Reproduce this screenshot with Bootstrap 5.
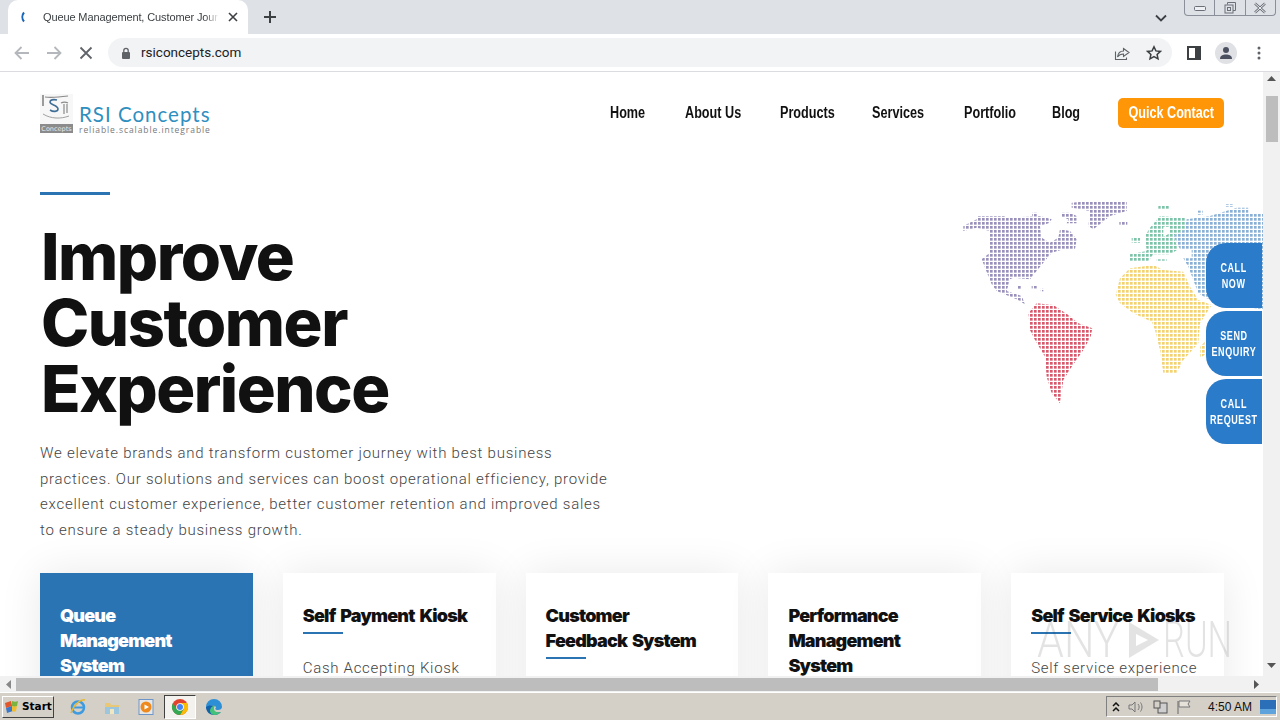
<!DOCTYPE html>
<html lang="en">
<head>
    <meta charset="UTF-8">
    <meta name="viewport" content="width=device-width, initial-scale=1.0">
    <title>Queue Management, Customer Journey - RSI Concepts</title>
    <link href="https://cdn.jsdelivr.net/npm/bootstrap@5.3.0/dist/css/bootstrap.min.css" rel="stylesheet">
    <style>
        html, body { height: 720px; overflow: hidden; }
        body { font-family: "Liberation Sans", sans-serif; background: #fff; }
        .win-shell { width: 1280px; height: 720px; }

        /* browser chrome */
        .tab-strip { height: 34px; background: #dee1e6; padding-left: 8px; }
        .tab-live { width: 240px; height: 34px; background: #fff; border-radius: 10px 10px 0 0; padding-left: 11px; padding-right: 9px; }
        .tab-name { font-size: 11px; letter-spacing: -.12px; color: #3c4043; width: 176px; margin-left: 16px; overflow: hidden; white-space: nowrap; -webkit-mask-image: linear-gradient(90deg, #000 92%, transparent); mask-image: linear-gradient(90deg, #000 92%, transparent); }
        .tab-plus { margin-left: 15px; }
        .tab-chevron { margin-left: auto; margin-right: 17px; margin-top: 2px; }
        .win-btns { align-self: flex-start; width: 92px; height: 16px; border: 1px solid #8a8f99; border-top: 0; border-radius: 0 0 4px 4px; margin-right: 4px; }
        .win-btns > span { height: 100%; border-right: 1px solid #8a8f99; }
        .win-btns > span:last-child { border-right: 0; }
        .tool-bar { height: 38px; background: #fff; border-bottom: 1px solid #dadce0; padding-left: 13px; }
        .omni { width: 1064px; height: 29px; margin-left: 15px; background: #f1f3f4; border-radius: 15px; padding-left: 13px; padding-right: 10px; font-size: 13.5px; color: #202124; font-family: Roboto, sans-serif; }
        .omni-host { margin-left: 10px; }
        .avatar-dot { width: 22px; height: 22px; border-radius: 50%; background: #dfe1e5; }
        .gap-fwd { margin-left: 14px; }
        .gap-stop { margin-left: 16px; }
        .gap-panel { margin-left: 15px; }
        .gap-avatar { margin-left: 14px; }
        .gap-dots { margin-left: 20px; }

        /* page area */
        .page-area { height: 604px; }
        .page-view { width: 1263px; height: 604px; overflow: hidden; }
        .scroll-v { width: 17px; height: 604px; background: #f1f1f1; }
        .scroll-v-thumb { width: 12px; height: 46px; background: #bdbdbd; margin: 15px auto 0; }
        .scroll-h { height: 16px; background: #f1f1f1; padding-left: 16px; }
        .scroll-h-thumb { width: 1142px; height: 13px; background: #bdbdbd; }
        .arrow-box { width: 16px; height: 16px; }

        .site-head { height: 82px; padding: 0 39px 0 40px; }
        .brand-text { margin-left: 6px; }
        .brand-name { font-family: Lato, sans-serif; font-size: 20.5px; line-height: 20px; color: #2f8fbf; letter-spacing: 1px; margin-bottom: 1px; }
        .brand-tag { font-family: "Open Sans", sans-serif; font-size: 8.5px; line-height: 9px; color: #77797c; letter-spacing: .93px; white-space: nowrap; margin-bottom: -1px; }
        .brand-strip { fill: #8b8b8b; }
        /* the nav face is a tall narrow grotesque: squeezed Liberation Sans in fixed columns */
        .nav-grid { display: grid; grid-template-columns: 37px 57px 54px 54px 50px 28px 106px; column-gap: 38px; align-items: center; }
        .site-link { font-weight: 700; font-size: 16px; color: #111; text-decoration: none; white-space: nowrap; display: inline-block; transform: scaleX(.79); transform-origin: left center; }
        .quick-btn { font-weight: 700; font-size: 16px; background: #ff9607; color: #fff; border: 0; border-radius: 5px; width: 106px; height: 30px; padding: 0; white-space: nowrap; }
        .quick-btn span { display: inline-block; transform: scaleX(.79); }

        .hero-wrap { padding-top: 36px; padding-left: 40px; height: 419px; }
        .hero-copy { width: 570px; }
        .hero-rule { width: 70px; height: 3px; background: #2b74b4; margin-top: 2px; margin-bottom: 29px; }
        .hero-title { font-family: Inter, sans-serif; font-weight: 800; font-size: 65px; line-height: 66px; color: #111; letter-spacing: -1.5px; margin: 0 0 19px 1px; }
        .hero-text { font-family: Roboto, sans-serif; font-weight: 300; font-size: 15px; line-height: 25.6px; letter-spacing: .76px; color: #444; margin: 0; width: 570px; }
        .hero-map { margin-left: auto; flex: none; }

        .side-stack { position: absolute; right: 1px; top: 171px; width: 56px; }
        .side-btn { width: 56px; height: 65px; margin-bottom: 3px; background: #2a7bc9; color: #fff; border-radius: 20px 0 0 20px; font-weight: 700; font-size: 12px; line-height: 16px; letter-spacing: .8px; text-align: center; }
        .side-btn span { display: inline-block; white-space: nowrap; transform: scaleX(.75); }

        .tile-row { gap: 30px; padding: 0 39px 0 40px; }
        .tile { width: 212.8px; height: 300px; padding: 30px 20px; background: #fff; box-shadow: 0 0 40px rgba(0,0,0,.09); flex: none; }
        .tile-on { background: #2b74b4; }
        .tile-title { font-family: Inter, sans-serif; font-weight: 900; font-size: 18px; line-height: 25px; letter-spacing: -.8px; word-spacing: 2px; color: #111; margin: 0; }
        .tile-on .tile-title { color: #fff; }
        .tile-rule { width: 40px; height: 2px; background: #2b74b4; margin-top: 4px; margin-bottom: 22px; }
        .tile-text { font-family: Roboto, sans-serif; font-weight: 300; font-size: 15px; line-height: 25px; letter-spacing: .7px; color: #444; margin: 0; white-space: nowrap; }

        .any-mark { position: absolute; left: 1037px; top: 615px; width: 197px; height: 50px; opacity: .13; pointer-events: none; color: #333; font-family: Roboto, sans-serif; font-weight: 300; font-size: 50px; line-height: 50px; }
        .any-word { transform: scaleX(.86); transform-origin: left center; width: 90px; flex: none; }
        .any-word-end { transform: scaleX(.69); transform-origin: left center; width: 69px; margin-left: 2px; flex: none; }

        /* taskbar */
        .task-bar { height: 28px; background: #d4d0c8; border-top: 1px solid #fff; box-shadow: inset 0 1px 0 #d4d0c8; padding-left: 2px; position: relative; }
        .start-btn { width: 52px; height: 22px; border: 1px solid; border-color: #fff #404040 #404040 #fff; font-family: "DejaVu Sans", sans-serif; font-size: 10.5px; font-weight: 700; color: #000; gap: 2px; padding-left: 1px; }
        .task-ico { width: 32px; height: 24px; margin-right: 2px; }
        .task-ico-on { background: #f4f2ee; border: 1px solid; border-color: #404040 #fff #fff #404040; }
        .task-ico-wrap { margin-left: 8px; }
        .tray-box { width: 171px; height: 21px; margin-left: auto; margin-right: 3px; border: 1px solid; border-color: #808080 #fff #fff #808080; font-size: 12px; color: #111; padding-left: 5px; }
        .tray-time { margin-left: 16px; margin-right: 8px; white-space: nowrap; }
        .tray-gap { margin-left: 8px; }
    </style>
</head>
<body>
<div class="win-shell d-flex flex-column">

    <!-- tab strip -->
    <div class="tab-strip d-flex align-items-center">
        <div class="tab-live d-flex align-items-center">
            <svg width="8" height="14" viewBox="0 0 8 14"><path d="M5 2.500a7 7 0 0 0 0 9" fill="none" stroke="#1a66b8" stroke-width="2"/></svg>
            <span class="tab-name">Queue Management, Customer Jour</span>
            <svg class="ms-auto" width="12" height="12" viewBox="0 0 12 12"><path d="M2 2l8 8M10 2l-8 8" stroke="#3c4043" stroke-width="1.600"/></svg>
        </div>
        <svg class="tab-plus" width="14" height="14" viewBox="0 0 14 14"><path d="M7 1v12M1 7h12" stroke="#3c4043" stroke-width="2"/></svg>
        <svg class="tab-chevron" width="12" height="8" viewBox="0 0 12 8"><path d="M1 1.500l5 5 5-5" fill="none" stroke="#3c4043" stroke-width="1.800"/></svg>
        <div class="win-btns d-flex">
            <span class="flex-fill d-flex align-items-center justify-content-center"><svg width="14" height="8" viewBox="0 0 14 8"><rect x="1.500" y="2.500" width="11" height="4" rx="1" fill="#eef0f3" stroke="#6a6f78"/></svg></span>
            <span class="flex-fill d-flex align-items-center justify-content-center"><svg width="14" height="14" viewBox="0 0 14 14"><path d="M4.500 3.500v-2h8v8h-2.500" fill="none" stroke="#6a6f78"/><rect x="2" y="4" width="8" height="8" fill="none" stroke="#6a6f78"/><rect x="4.500" y="6.500" width="3" height="3" fill="none" stroke="#6a6f78"/></svg></span>
            <span class="flex-fill d-flex align-items-center justify-content-center"><svg width="14" height="12" viewBox="0 0 14 12"><path d="M2 1.500l10 9M12 1.500l-10 9" stroke="#6a6f78" stroke-width="2.400"/><path d="M2 1.500l10 9M12 1.500l-10 9" stroke="#eef0f3" stroke-width="1"/></svg></span>
        </div>
    </div>

    <!-- toolbar -->
    <div class="tool-bar d-flex align-items-center">
        <svg width="18" height="16" viewBox="0 0 18 16"><path d="M16 8H3M8.500 2L2.500 8l6 6" fill="none" stroke="#b4b7bb" stroke-width="1.800"/></svg>
        <svg class="gap-fwd" width="18" height="16" viewBox="0 0 18 16"><path d="M2 8h13M9.500 2l6 6-6 6" fill="none" stroke="#b4b7bb" stroke-width="1.800"/></svg>
        <svg class="gap-stop" width="14" height="14" viewBox="0 0 14 14"><path d="M1.500 1.500l11 11M12.500 1.500l-11 11" stroke="#5f6368" stroke-width="1.800"/></svg>
        <div class="omni d-flex align-items-center">
            <svg width="10" height="12" viewBox="0 0 10 12"><rect x="1" y="5" width="8" height="7" rx="1" fill="#5f6368"/><path d="M2.800 5V3.500a2.200 2.200 0 0 1 4.400 0V5" fill="none" stroke="#5f6368" stroke-width="1.300"/></svg>
            <span class="omni-host">rsiconcepts.com</span>
            <svg class="ms-auto" width="16" height="16" viewBox="0 0 16 16"><path d="M9.500 3.500L15 7.500l-5.500 4V9C6 9 4.500 10.500 3.500 12 4 8.500 6 6 9.500 6z M1.500 6.500v8h11v-2" fill="none" stroke="#5f6368" stroke-width="1.100"/></svg>
            <svg class="ms-3" width="16" height="16" viewBox="0 0 16 16"><path d="M8 1.800l1.900 4.100 4.500.5-3.300 3 .9 4.500L8 11.700l-4 2.200.9-4.500-3.300-3 4.500-.5z" fill="none" stroke="#3c4043" stroke-width="1.500"/></svg>
        </div>
        <svg class="gap-panel" width="14" height="14" viewBox="0 0 14 14"><rect width="14" height="14" fill="#3c4043"/><rect x="2" y="2" width="6" height="10" fill="#fff"/></svg>
        <div class="avatar-dot gap-avatar d-flex align-items-center justify-content-center">
            <svg width="14" height="14" viewBox="0 0 14 14"><circle cx="7" cy="4" r="3" fill="#4a5060"/><path d="M1 13c0-3.500 3-4.500 6-4.500s6 1 6 4.500z" fill="#4a5060"/></svg>
        </div>
        <svg class="gap-dots" width="4" height="14" viewBox="0 0 4 14"><circle cx="2" cy="2" r="1.500" fill="#5f6368"/><circle cx="2" cy="7" r="1.500" fill="#5f6368"/><circle cx="2" cy="12" r="1.500" fill="#5f6368"/></svg>
    </div>

    <!-- page + scrollbars -->
    <div class="page-area d-flex">
        <div class="page-view position-relative">
            <header class="site-head d-flex align-items-center justify-content-between">
                <a class="d-flex align-items-end text-decoration-none" href="#">
                    <svg width="33" height="39" viewBox="0 0 33 39">
                        <rect x="0" y="0" width="33" height="30" fill="#f7f7f7"/>
                        <path d="M3 1v11" fill="none" stroke="#6a6a6a" stroke-width="1.300"/>
                        <path d="M5 3c7 1 15 0 23-1" fill="none" stroke="#8a8a8a" stroke-width="1.200"/>
                        <path d="M17 6c-4-1-7 0-7 2 0 3 8 3 8 7 0 3-5 3-8 1" fill="none" stroke="#3f6f96" stroke-width="1.600"/>
                        <path d="M21 9c2-1 5-1 7 0M24 10v10M27 10v9" fill="none" stroke="#8a8a8a" stroke-width="1.200"/>
                        <path d="M3 20c8 5 18 5 26 2" fill="none" stroke="#a0a0a0" stroke-width="1"/>
                        <rect class="brand-strip" y="30" width="33" height="9"/>
                        <text x="16.500" y="37" text-anchor="middle" font-size="6.500" font-family="DejaVu Sans, sans-serif" fill="#e8e8e8">Concepts</text>
                    </svg>
                    <span class="brand-text d-flex flex-column">
                        <span class="brand-name">RSI Concepts</span>
                        <span class="brand-tag">reliable.scalable.integrable</span>
                    </span>
                </a>
                <nav class="nav-grid">
                    <a class="site-link" href="#">Home</a>
                    <a class="site-link" href="#">About Us</a>
                    <a class="site-link" href="#">Products</a>
                    <a class="site-link" href="#">Services</a>
                    <a class="site-link" href="#">Portfolio</a>
                    <a class="site-link" href="#">Blog</a>
                    <button class="quick-btn d-flex align-items-center justify-content-center" type="button"><span>Quick Contact</span></button>
                </nav>
            </header>

            <section class="hero-wrap d-flex">
                <div class="hero-copy">
                    <div class="hero-rule"></div>
                    <h1 class="hero-title">Improve<br>Customer<br>Experience</h1>
                    <p class="hero-text">We elevate brands and transform customer journey with best business practices. Our solutions and services can boost operational efficiency, provide excellent customer experience, better customer retention and improved sales to ensure a steady business growth.</p>
                </div>
                <svg class="hero-map" width="313" height="270" viewBox="0 0 939 810">
                    <defs>
                        <pattern id="dotPurple" width="12" height="12" patternUnits="userSpaceOnUse"><rect width="8" height="8" fill="#9a90bc"/></pattern>
                        <pattern id="dotRed" width="12" height="12" patternUnits="userSpaceOnUse"><rect width="8" height="8" fill="#d9596c"/></pattern>
                        <pattern id="dotYellow" width="12" height="12" patternUnits="userSpaceOnUse"><rect width="8" height="8" fill="#f4d272"/></pattern>
                        <pattern id="dotGreen" width="12" height="12" patternUnits="userSpaceOnUse"><rect width="8" height="8" fill="#7cc3a8"/></pattern>
                        <pattern id="dotBlue" width="12" height="12" patternUnits="userSpaceOnUse"><rect width="8" height="8" fill="#8bb0d6"/></pattern>
                    </defs>
                    <g fill="url(#dotPurple)">
                        <polygon points="40,108 80,88 85,78 165,78 170,83 270,78 305,88 300,98 270,108 275,143 300,158 325,143 330,118 360,123 380,148 375,178 340,178 305,188 280,218 260,243 240,268 190,263 180,268 170,303 215,318 225,343 200,328 140,303 125,283 115,258 95,208 120,188 120,123 80,113 40,123"/>
                        <polygon points="365,38 420,33 530,33 530,63 480,78 450,103 430,118 415,108 420,63 365,53"/>
                        <polygon points="335,68 360,68 380,78 380,100 350,100 355,88 335,80"/>
                        <polygon points="508,96 532,96 532,105 508,105"/>
                        <polygon points="204,288 216,288 216,300 204,300"/>
                        <polygon points="245,288 262,288 262,296 245,296"/>
                        <polygon points="272,296 280,296 280,304 272,304"/>
                        <polygon points="246,68 262,68 262,78 246,78"/>
                    </g>
                    <polygon fill="url(#dotRed)" points="235,370 260,340 310,345 355,375 385,400 427,415 422,440 400,480 365,530 340,570 330,640 305,610 290,560 285,500 255,450 240,420"/>
                    <g fill="url(#dotGreen)">
                        <polygon points="600,113 630,78 705,83 705,118 670,138 685,178 660,193 610,193 595,213 540,213 540,193 590,183 585,138"/>
                        <polygon points="545,143 570,143 570,158 545,158"/>
                        <polygon points="625,46 660,46 660,58 625,58"/>
                        <polygon points="620,208 650,208 650,216 620,216"/>
                    </g>
                    <g fill="url(#dotBlue)">
                        <polygon points="710,88 780,78 860,53 895,53 895,70 939,70 939,360 770,325 745,310 730,270 715,230 700,205 725,205 725,178 690,178 670,138 705,118"/>
                        <polygon points="825,42 850,42 850,50 825,50"/>
                        <polygon points="742,62 758,62 758,74 742,74"/>
                    </g>
                    <polygon fill="#fff" points="640,110 660,110 660,130 640,140"/>
                    <polygon fill="url(#dotYellow)" points="510,265 540,235 610,225 640,240 700,245 720,290 745,330 785,345 750,400 745,460 700,510 680,550 640,550 630,480 615,420 605,395 550,370 510,340 497,315"/>
                    <polygon fill="url(#dotYellow)" points="750,470 770,450 770,490 750,505"/>
                </svg>
            </section>

            <div class="side-stack">
                <div class="side-btn d-flex align-items-center justify-content-center"><span>CALL<br>NOW</span></div>
                <div class="side-btn d-flex align-items-center justify-content-center"><span>SEND<br>ENQUIRY</span></div>
                <div class="side-btn d-flex align-items-center justify-content-center"><span>CALL<br>REQUEST</span></div>
            </div>

            <section class="tile-row d-flex">
                <div class="tile tile-on">
                    <h3 class="tile-title">Queue<br>Management<br>System</h3>
                    <div class="tile-rule"></div>
                </div>
                <div class="tile">
                    <h3 class="tile-title">Self Payment Kiosk</h3>
                    <div class="tile-rule"></div>
                    <p class="tile-text">Cash Accepting Kiosk</p>
                </div>
                <div class="tile">
                    <h3 class="tile-title">Customer<br>Feedback System</h3>
                    <div class="tile-rule"></div>
                </div>
                <div class="tile">
                    <h3 class="tile-title">Performance<br>Management<br>System</h3>
                    <div class="tile-rule"></div>
                </div>
                <div class="tile">
                    <h3 class="tile-title">Self Service Kiosks</h3>
                    <div class="tile-rule"></div>
                    <p class="tile-text">Self service experience</p>
                </div>
            </section>
        </div>
        <div class="scroll-v d-flex flex-column">
            <svg class="mx-auto mt-1" width="9" height="5" viewBox="0 0 9 5"><path d="M4.500 0L9 5H0z" fill="#555"/></svg>
            <div class="scroll-v-thumb"></div>
            <svg class="mx-auto mt-auto mb-2" width="9" height="5" viewBox="0 0 9 5"><path d="M4.500 5L9 0H0z" fill="#555"/></svg>
        </div>
    </div>

    <div class="scroll-h d-flex align-items-center position-relative">
        <div class="scroll-h-thumb"></div>
        <span class="arrow-box position-absolute top-0 start-0 d-flex align-items-center justify-content-center"><svg width="5" height="9" viewBox="0 0 5 9"><path d="M0 4.500L5 0v9z" fill="#888"/></svg></span>
        <span class="arrow-box position-absolute top-0 end-0 me-3 d-flex align-items-center justify-content-center"><svg width="5" height="9" viewBox="0 0 5 9"><path d="M5 4.500L0 0v9z" fill="#555"/></svg></span>
    </div>

    <!-- taskbar -->
    <div class="task-bar d-flex align-items-center">
        <div class="start-btn d-flex align-items-center">
            <svg width="16" height="16" viewBox="0 0 16 16"><path d="M1 4l6-2 1 5-6 2z" fill="#e2562b"/><path d="M8 2c2 1 4 1 6 0l-1 5c-2 1-3 1-5 0z" fill="#7cb23f"/><path d="M2 9l6-2 1 5-6 2z" fill="#3b78c9"/><path d="M8 7c2 1 3 1 5 0l-1 5c-1 1-3 1-4 0z" fill="#f1bc2d"/></svg>
            <span>Start</span>
        </div>
        <div class="task-ico-wrap d-flex align-items-center">
            <div class="task-ico d-flex align-items-center justify-content-center">
                <svg width="18" height="18" viewBox="0 0 18 18"><circle cx="9" cy="9.500" r="6" fill="none" stroke="#3f9be0" stroke-width="2.500"/><path d="M4 9.500h10" stroke="#3f9be0" stroke-width="2"/><path d="M2 15C5 6 12 1 16 2" fill="none" stroke="#e8b832" stroke-width="1.500"/></svg>
            </div>
            <div class="task-ico d-flex align-items-center justify-content-center">
                <svg width="18" height="18" viewBox="0 0 18 18"><path d="M2 5h5l1 2h8v9H2z" fill="#e8c876"/><rect x="2" y="9" width="14" height="7" fill="#9cc6de"/><rect x="7" y="11" width="4" height="5" fill="#f0e6c0"/></svg>
            </div>
            <div class="task-ico d-flex align-items-center justify-content-center">
                <svg width="18" height="18" viewBox="0 0 18 18"><rect x="2" y="1.500" width="14" height="15" fill="#e6e6e6" stroke="#6d96c8"/><circle cx="9" cy="9" r="5.500" fill="#ee8a1d"/><path d="M7.500 6.500L12 9l-4.500 2.500z" fill="#fff"/></svg>
            </div>
            <div class="task-ico task-ico-on d-flex align-items-center justify-content-center">
                <svg width="18" height="18" viewBox="0 0 18 18"><circle cx="9" cy="9" r="8" fill="#e0442f"/><path d="M9 5h7a8 8 0 0 1-7 12l3.500-6z" fill="#fbbc05"/><path d="M2 5a8 8 0 0 0 7 12l3.500-6H5.500z" fill="#34a853"/><circle cx="9" cy="9" r="3.800" fill="#fff"/><circle cx="9" cy="9" r="3" fill="#4285f4"/></svg>
            </div>
            <div class="task-ico d-flex align-items-center justify-content-center">
                <svg width="18" height="18" viewBox="0 0 18 18"><path d="M1 9a8 8 0 0 1 16 0c0 2-2 3-4 3-3 0-3-1-2-3-1-2-7-3-9 3z" fill="#2d8fd5"/><path d="M1 9c0 5 4 8 8 8 3 0 5-1 7-3-4 1-8 0-8-3 0-2 1-3 2-3-4-1-8 0-9 1z" fill="#1560a8"/><path d="M9 11c0 3 4 4 7 3-2 2-4 3-6 3-3 0-5-2-5-4 0-3 3-6 5-5-1 0-1 2-1 3z" fill="#45c27a"/></svg>
            </div>
        </div>
        <div class="tray-box d-flex align-items-center">
            <svg width="8" height="10" viewBox="0 0 8 10"><path d="M1 4l3-3 3 3M1 9l3-3 3 3" fill="none" stroke="#111" stroke-width="1.500"/></svg>
            <svg class="tray-gap" width="16" height="14" viewBox="0 0 16 14"><path d="M1 5h3l3-3v10L4 9H1z" fill="#d4d0c8" stroke="#777"/><path d="M10 4c1.500 2 1.500 4 0 6M12.500 2.500c2 3 2 6 0 9" fill="none" stroke="#777"/></svg>
            <svg class="tray-gap" width="16" height="14" viewBox="0 0 16 14"><rect x="6" y="3" width="9" height="10" fill="#cfcfcf" stroke="#555"/><rect x="2" y="1" width="6" height="7" fill="#d4d0c8" stroke="#555"/></svg>
            <svg class="tray-gap" width="16" height="14" viewBox="0 0 16 14"><path d="M2 1v13" stroke="#666"/><path d="M3 1h11l-2 3 2 3H3z" fill="#e6e2da" stroke="#777"/></svg>
            <span class="tray-time">4:50 AM</span>
            <svg width="16" height="14" viewBox="0 0 16 14"><rect width="16" height="14" fill="#2b6fb8"/><rect y="9" width="16" height="5" fill="#5fa3dd"/></svg>
        </div>
    </div>
</div>

<div class="any-mark d-flex align-items-center">
    <span class="any-word d-inline-block">ANY</span>
    <svg width="34" height="38" viewBox="0 0 34 38"><path d="M2 1l30 18L2 37zM9 13v12l12-6z" fill="#333" fill-rule="evenodd"/></svg>
    <span class="any-word-end d-inline-block">RUN</span>
</div>

<script src="https://cdn.jsdelivr.net/npm/bootstrap@5.3.0/dist/js/bootstrap.bundle.min.js"></script>
</body>
</html>
